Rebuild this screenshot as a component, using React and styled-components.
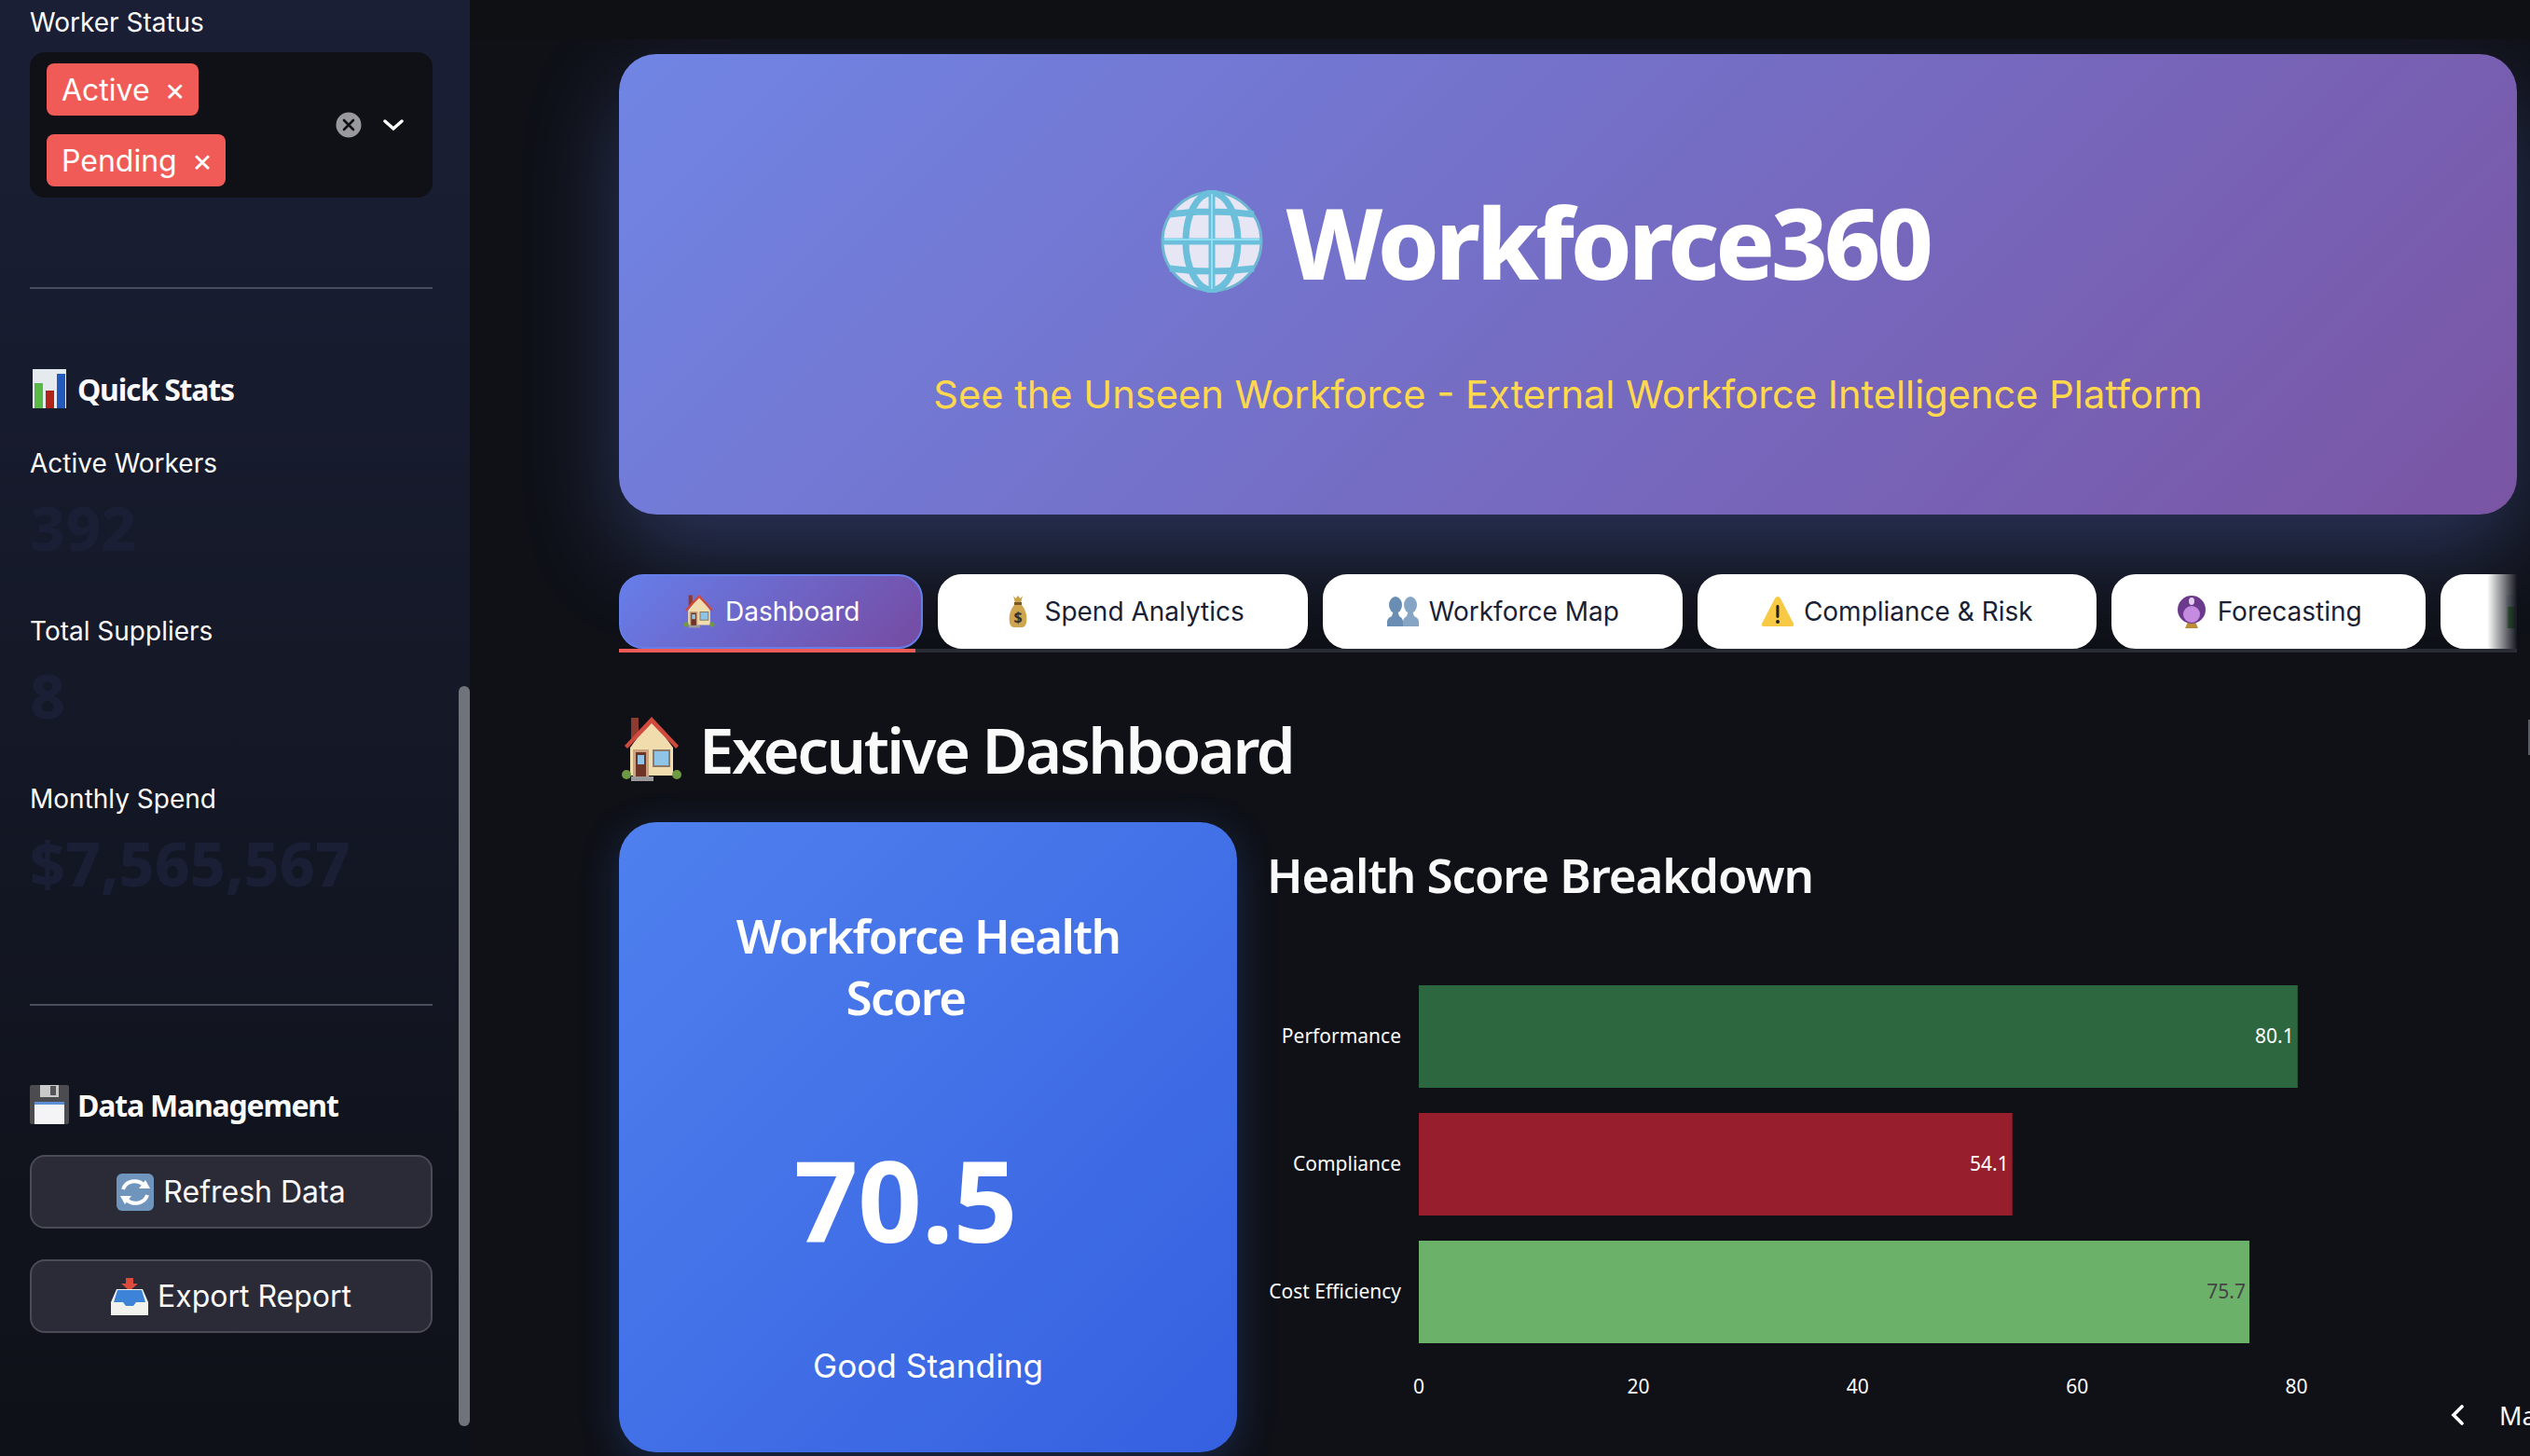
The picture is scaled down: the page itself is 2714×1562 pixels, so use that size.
import styled, { createGlobalStyle } from "styled-components";

const GlobalStyle = createGlobalStyle`
  html, body {
    margin: 0;
    padding: 0;
    background: #0f1117;
    overflow: hidden;
  }
  * {
    box-sizing: border-box;
  }
`;

const sans = `"Inter", "Liberation Sans", sans-serif`;
const head = `"Noto Sans", "Open Sans", sans-serif`;

const Globe = ({ size }) => (
  <svg width={size} height={size} viewBox="0 0 110 110">
    <circle cx="55" cy="55" r="53" fill="#e6e6f4" stroke="#6db5d0" strokeWidth="3" />
    <g fill="none" stroke="#6cbfdb" strokeWidth="7">
      <ellipse cx="55" cy="55" rx="28" ry="52" />
      <path d="M55 2v106M2 55h106M10 26q45 -6 90 0M10 84q45 6 90 0" />
    </g>
    <g fill="none" stroke="#8fe0f2" strokeWidth="2">
      <path d="M55 4v102M4 53h102" />
    </g>
  </svg>
);

const BarsIcon = ({ size }) => (
  <svg width={size} height={size} viewBox="0 0 36 42">
    <rect width="36" height="42" fill="#e4eaee" />
    <rect x="2" y="15" width="9" height="27" fill="#58b947" />
    <rect x="14" y="23" width="9" height="19" fill="#b0241a" />
    <rect x="26" y="5" width="9" height="37" fill="#2359bd" />
  </svg>
);

const FloppyIcon = ({ size }) => (
  <svg width={size} height={size} viewBox="0 0 42 42">
    <rect width="42" height="42" rx="2" fill="#4b4b50" />
    <rect x="11" y="0" width="20" height="13" fill="#c9c9c9" />
    <rect x="22" y="1" width="6" height="10" fill="#55555a" />
    <rect x="5" y="18" width="32" height="24" fill="#f4f4f6" />
    <rect x="5" y="18" width="32" height="3" fill="#5c8fd6" />
  </svg>
);

const RefreshIcon = ({ size }) => (
  <svg width={size} height={size} viewBox="0 0 40 40">
    <rect width="40" height="40" rx="6" fill="#6f95bd" />
    <g fill="none" stroke="#fff" strokeWidth="4">
      <path d="M7 17a13 12 0 0 1 22 -5" />
      <path d="M33 23a13 12 0 0 1 -22 5" />
    </g>
    <path d="M24 16h12l-5 -9z" fill="#fff" />
    <path d="M16 24h-12l5 9z" fill="#fff" />
  </svg>
);

const InboxIcon = ({ size }) => (
  <svg width={size} height={size} viewBox="0 0 40 40">
    <path d="M16 0h8v6h5l-9 8 -9 -8h5z" fill="#dc4a3c" />
    <path d="M6 12h28l6 14v14h-40v-14z" fill="#f1f1ee" />
    <path d="M7 13h26l4 13h-10l-3 4h-8l-3 -4h-10z" fill="#3d84d8" />
  </svg>
);

const HouseIcon = ({ size }) => (
  <svg width={size} height={size} viewBox="0 0 70 70">
    <rect x="13" y="1" width="8" height="22" fill="#8d3b30" />
    <path d="M12 33l23 -31 23 31v30h-46z" fill="#f1dcae" />
    <path d="M6 31l29 -31 29 31 -3 3 -26 -27 -26 27z" fill="#cf4a3c" />
    <rect x="15" y="35" width="17" height="29" fill="#caa47e" />
    <rect x="18" y="38" width="11" height="26" fill="#6e3527" />
    <rect x="20" y="41" width="7" height="10" fill="#8fc4e6" />
    <rect x="36" y="35" width="19" height="19" fill="#8e7a66" />
    <rect x="38" y="37" width="15" height="15" fill="#8fc4e6" />
    <circle cx="8" cy="62" r="5" fill="#6f9a44" />
    <circle cx="62" cy="62" r="5" fill="#6f9a44" />
    <rect x="13" y="64" width="24" height="5" fill="#9a9a9a" />
  </svg>
);

const BagIcon = ({ size }) => (
  <svg width={size} height={size} viewBox="0 0 36 36">
    <path d="M13 1l2.5 3 2.5 -3 2.5 3 2.5 -3 -2 8h-6z" fill="#c9a24a" />
    <path d="M15 10h6c6 6 7 14 6 20q-1 5 -5 5h-8q-4 0 -5 -5c-1 -6 0 -14 6 -20z" fill="#cfa64f" />
    <rect x="14" y="8" width="8" height="3" fill="#7b5a22" />
    <text x="18" y="30" textAnchor="middle" fontSize="16" fontWeight="700" fontFamily={head} fill="#33302c">$</text>
  </svg>
);

const BustsIcon = ({ size }) => (
  <svg width={size} height={size} viewBox="0 0 36 36">
    <g fill="#6a8db3">
      <ellipse cx="10" cy="11" rx="7" ry="9" />
      <path d="M1 34v-5q0 -4 5 -6l2 -6h4l2 6q4 2 4 6v5z" />
    </g>
    <g fill="#86a5c4">
      <ellipse cx="26" cy="11" rx="7" ry="9" />
      <path d="M18 34v-5q0 -4 4 -6l2 -6h4l2 6q5 2 5 6v5z" />
    </g>
  </svg>
);

const WarnIcon = ({ size }) => (
  <svg width={size} height={size} viewBox="0 0 36 36">
    <path d="M18 2q2 0 3 2l14 27q1 3 -2 3h-30q-3 0 -2 -3l14 -27q1 -2 3 -2z" fill="#f7c944" />
    <rect x="16.4" y="11" width="3" height="14" rx="1.4" fill="#222" />
    <circle cx="18" cy="29" r="2" fill="#222" />
  </svg>
);

const BallIcon = ({ size }) => (
  <svg width={size} height={size} viewBox="0 0 36 36">
    <path d="M11 36l3 -7h8l3 7z" fill="#bd8c36" />
    <circle cx="18" cy="16" r="15" fill="#6c3a8c" />
    <circle cx="18" cy="21" r="9" fill="#c48be0" />
    <ellipse cx="18" cy="7" rx="3" ry="4" fill="#e5d0f0" />
  </svg>
);

const stats = [
  { label: "Active Workers", value: "392" },
  { label: "Total Suppliers", value: "8" },
  { label: "Monthly Spend", value: "$7,565,567" },
];

const tabs = [
  { label: "Dashboard", Icon: HouseIcon, active: true },
  { label: "Spend Analytics", Icon: BagIcon },
  { label: "Workforce Map", Icon: BustsIcon },
  { label: "Compliance & Risk", Icon: WarnIcon },
  { label: "Forecasting", Icon: BallIcon },
  { label: "", Icon: BarsIcon },
];

const bars = [
  { label: "Performance", value: 80.1, fill: "#2d673f", text: "#fff" },
  { label: "Compliance", value: 54.1, fill: "#971e2d", text: "#fff" },
  { label: "Cost Efficiency", value: 75.7, fill: "#6cb16a", text: "#444" },
];

const ChartSvg = styled.svg`
  display: block;
  overflow: visible;
`;

const BreakdownChart = () => {
  const unit = 11.77;
  return (
    <ChartSvg width="1341" height="480" viewBox="0 0 1341 480">
      {bars.map((b, i) => {
        const y = 17 + i * 137;
        const w = b.value * unit;
        return (
          <g key={b.label} fontFamily={head} fontSize="21">
            <rect x="163" y={y} width={w} height="110" fill={b.fill} />
            <text x="144" y={y + 62} textAnchor="end" fill="#fafafa">{b.label}</text>
            <text x={163 + w - 4} y={y + 62} textAnchor="end" fill={b.text}>{b.value}</text>
          </g>
        );
      })}
      {[0, 20, 40, 60, 80].map((t) => (
        <text key={t} x={163 + t * unit} y="455" textAnchor="middle" fontFamily={head} fontSize="21" fill="#fafafa">
          {t}
        </text>
      ))}
    </ChartSvg>
  );
};

export default function App() {
  return (
    <Page>
      <GlobalStyle />
      <Sidebar>
        <FieldLabel>Worker Status</FieldLabel>
        <Select>
          <TagList>
            <Tag>Active<TagClose>×</TagClose></Tag>
            <Tag>Pending<TagClose>×</TagClose></Tag>
          </TagList>
          <SelectIcons>
            <svg width="28" height="28" viewBox="0 0 28 28">
              <circle cx="14" cy="14" r="13.5" fill="#9a9a9e" />
              <path d="M9 9l10 10M19 9l-10 10" stroke="#0f1117" strokeWidth="2.6" strokeLinecap="round" />
            </svg>
            <svg width="22" height="14" viewBox="0 0 22 14">
              <path d="M2 3l9 8 9 -8" fill="none" stroke="#fff" strokeWidth="3.4" strokeLinecap="round" />
            </svg>
          </SelectIcons>
        </Select>
        <Divider $top={96} />
        <SideHead $top={85}>
          <BarsIcon size={42} />
          Quick Stats
        </SideHead>
        <Stats>
          {stats.map((s) => (
            <Stat key={s.label}>
              <FieldLabel>{s.label}</FieldLabel>
              <StatValue>{s.value}</StatValue>
            </Stat>
          ))}
        </Stats>
        <Divider $top={58} />
        <SideHead $top={84}>
          <FloppyIcon size={42} />
          Data Management
        </SideHead>
        <SideButton $top={32}>
          <RefreshIcon size={40} />
          Refresh Data
        </SideButton>
        <SideButton $top={33}>
          <InboxIcon size={40} />
          Export Report
        </SideButton>
        <ScrollThumb />
      </Sidebar>
      <Main>
        <TopBar />
        <Hero>
          <HeroTitle>
            <Globe size={110} />
            Workforce360
            <Anchor $width={25} />
          </HeroTitle>
          <HeroTagline>See the Unseen Workforce - External Workforce Intelligence Platform</HeroTagline>
        </Hero>
        <TabBar>
          <TabList>
            {tabs.map(({ label, Icon, active }, i) => (
              <Tab key={i} $active={active}>
                <Icon size={36} />
                {label}
              </Tab>
            ))}
          </TabList>
          <TabUnderline />
          <TabFade />
        </TabBar>
        <PageHeading>
          <HouseIcon size={70} />
          Executive Dashboard
        </PageHeading>
        <Columns>
          <ScoreCard>
            <ScoreTitle>
              Workforce Health
              <br />
              Score
              <Anchor $width={48} />
            </ScoreTitle>
            <ScoreValue>
              70.5
              <Anchor $width={48} />
            </ScoreValue>
            <ScoreNote>Good Standing</ScoreNote>
          </ScoreCard>
          <ChartColumn>
            <ChartHeading>Health Score Breakdown</ChartHeading>
            <BreakdownChart />
          </ChartColumn>
        </Columns>
        <Pager>
          <svg width="16" height="24" viewBox="0 0 16 24">
            <path d="M13 3l-9 9 9 9" fill="none" stroke="#fff" strokeWidth="3.6" strokeLinecap="round" />
          </svg>
          <span>Ma</span>
        </Pager>
        <EdgeMark />
      </Main>
    </Page>
  );
}

const Page = styled.div`
  display: flex;
  width: 2714px;
  height: 1562px;
  overflow: hidden;
  background: #0f1117;
  color: #fafafa;
  font-family: ${sans};
`;

const Sidebar = styled.aside`
  position: relative;
  z-index: 2;
  flex: 0 0 504px;
  height: 100%;
  padding: 6px 40px 0 32px;
  background: linear-gradient(180deg, #1a1f36 0%, #0e1117 100%);
`;

const FieldLabel = styled.div`
  font-size: 28px;
  line-height: 36px;
  color: #fafafa;
`;

const Select = styled.div`
  display: flex;
  align-items: center;
  justify-content: space-between;
  margin-top: 14px;
  padding: 12px 31px 12px 18px;
  border-radius: 16px;
  background: #0f1116;
`;

const TagList = styled.div`
  display: flex;
  flex-direction: column;
  align-items: flex-start;
  gap: 20px;
`;

const Tag = styled.span`
  display: flex;
  align-items: center;
  height: 56px;
  padding: 0 14px 0 16px;
  border-radius: 8px;
  background: #f05b58;
  font-size: 32px;
  color: #fff;
`;

const TagClose = styled.span`
  margin-left: 16px;
  font-size: 34px;
  line-height: 1;
`;

const SelectIcons = styled.div`
  display: flex;
  align-items: center;
  gap: 23px;
`;

const Divider = styled.hr`
  margin: ${(p) => p.$top}px 0 0;
  border: 0;
  height: 2px;
  background: #4a4d5c;
`;

const SideHead = styled.h3`
  display: flex;
  align-items: center;
  gap: 9px;
  height: 44px;
  margin: ${(p) => p.$top}px 0 0;
  font-family: ${head};
  font-size: 32px;
  font-weight: 700;
  letter-spacing: -1.2px;
  color: #fafafa;
`;

const Stats = styled.div`
  margin-top: 40px;
`;

const Stat = styled.div`
  height: 180px;
`;

const StatValue = styled.div`
  margin-top: 10px;
  font-family: ${head};
  font-size: 66px;
  font-weight: 800;
  line-height: 80px;
  color: #1a1f36;
`;

const SideButton = styled.button`
  display: flex;
  align-items: center;
  justify-content: center;
  gap: 10px;
  width: 100%;
  height: 79px;
  margin-top: ${(p) => p.$top}px;
  border: 2px solid #4a4b57;
  border-radius: 16px;
  background: #2a2b36;
  color: #fafafa;
  font-family: ${sans};
  font-size: 32px;
`;

const ScrollThumb = styled.div`
  position: absolute;
  top: 736px;
  right: 0;
  width: 12px;
  height: 794px;
  border-radius: 6px;
  background: #71737b;
`;

const Main = styled.main`
  position: relative;
  flex: 1;
  min-width: 0;
  height: 100%;
  padding: 0 14px 0 160px;
  overflow: hidden;
`;

const TopBar = styled.div`
  position: relative;
  z-index: 1;
  height: 42px;
  margin: 0 -14px 0 -160px;
  background: #0e1014;
`;

const Hero = styled.section`
  display: flex;
  flex-direction: column;
  align-items: center;
  height: 494px;
  margin-top: 16px;
  padding-top: 133px;
  border-radius: 40px;
  background: linear-gradient(135deg, #7085e4 0%, #7a55a4 100%);
  box-shadow: 0 40px 100px rgba(102, 126, 234, 0.32);
`;

const HeroTitle = styled.h1`
  display: flex;
  align-items: center;
  gap: 24px;
  height: 136px;
  margin: 0;
  font-family: ${head};
  font-size: 105px;
  font-weight: 800;
  letter-spacing: -4px;
  color: #fff;
`;

const Anchor = styled.span`
  display: inline-block;
  width: ${(p) => p.$width}px;
`;

const HeroTagline = styled.p`
  margin: 66px 0 0;
  font-size: 41.6px;
  line-height: 60px;
  color: #ffd84d;
`;

const TabBar = styled.div`
  position: relative;
  margin-top: 64px;
`;

const TabList = styled.div`
  display: flex;
  gap: 16px;
  height: 84px;
  overflow: hidden;
  border-bottom: 4px solid #2a2c35;
`;

const Tab = styled.div`
  display: flex;
  flex: 0 0 auto;
  align-items: center;
  gap: 10px;
  height: 80px;
  padding: 0 66px;
  border: 2px solid ${(p) => (p.$active ? "#667eea" : "#fff")};
  border-radius: 26px;
  background: ${(p) => (p.$active ? "linear-gradient(135deg, #667eea 0%, #764ba2 100%)" : "#fff")};
  color: ${(p) => (p.$active ? "#fff" : "#1a1f36")};
  font-size: 28px;
  white-space: nowrap;
`;

const TabUnderline = styled.div`
  position: absolute;
  left: 0;
  bottom: 0;
  width: 318px;
  height: 4px;
  background: #f05b58;
`;

const TabFade = styled.div`
  position: absolute;
  top: 0;
  right: 0;
  width: 32px;
  height: 80px;
  background: linear-gradient(90deg, rgba(16, 19, 28, 0), #14171f);
`;

const PageHeading = styled.h2`
  display: flex;
  align-items: center;
  gap: 16px;
  height: 70px;
  margin: 69px 0 0;
  font-family: ${head};
  font-size: 67px;
  font-weight: 600;
  letter-spacing: -2.5px;
  color: #fafafa;
`;

const Columns = styled.div`
  display: flex;
  gap: 32px;
  margin-top: 43px;
`;

const ScoreCard = styled.section`
  flex: 0 0 663px;
  height: 676px;
  padding-top: 88px;
  border-radius: 40px;
  background: linear-gradient(135deg, #4f80ee 0%, #3560e0 100%);
  box-shadow: 0 10px 40px rgba(59, 110, 230, 0.25);
  text-align: center;
  color: #fff;
`;

const ScoreTitle = styled.h3`
  margin: 0;
  font-family: ${head};
  font-size: 51px;
  font-weight: 600;
  line-height: 66px;
  letter-spacing: -1.6px;
`;

const ScoreValue = styled.div`
  margin-top: 115px;
  font-family: ${head};
  font-size: 120px;
  font-weight: 700;
  line-height: 140px;
`;

const ScoreNote = styled.div`
  margin-top: 84px;
  font-size: 35.2px;
  line-height: 48px;
`;

const ChartColumn = styled.section`
  flex: 1;
  min-width: 0;
`;

const ChartHeading = styled.h3`
  height: 66px;
  margin: 23px 0 69px;
  font-family: ${head};
  font-size: 51px;
  font-weight: 600;
  line-height: 66px;
  letter-spacing: -1.1px;
  color: #fafafa;
`;

const Pager = styled.div`
  position: absolute;
  left: 2124px;
  top: 1498px;
  display: flex;
  align-items: center;
  gap: 37px;
  height: 40px;
  font-family: ${head};
  font-size: 27px;
  color: #fafafa;
`;

const EdgeMark = styled.div`
  position: absolute;
  right: 0;
  top: 772px;
  width: 2px;
  height: 38px;
  background: #5a5c64;
`;
